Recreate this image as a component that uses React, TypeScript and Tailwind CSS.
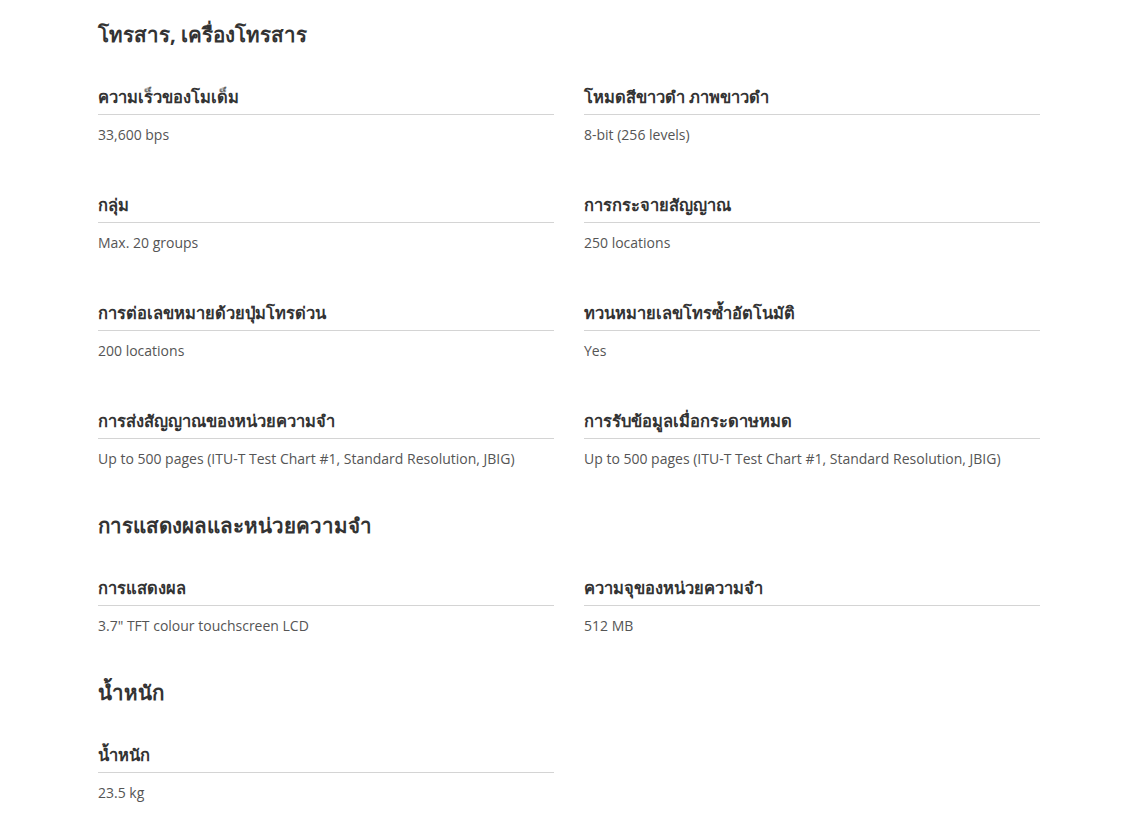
import React from "react";

type Item = { label: string; value: string };
type Section = { title: string; items: Item[] };

const sections: Section[] = [
  {
    title: "โทรสาร, เครื่องโทรสาร",
    items: [
      { label: "ความเร็วของโมเด็ม", value: "33,600 bps" },
      { label: "โหมดสีขาวดำ ภาพขาวดำ", value: "8-bit (256 levels)" },
      { label: "กลุ่ม", value: "Max. 20 groups" },
      { label: "การกระจายสัญญาณ", value: "250 locations" },
      { label: "การต่อเลขหมายด้วยปุ่มโทรด่วน", value: "200 locations" },
      { label: "ทวนหมายเลขโทรซ้ำอัตโนมัติ", value: "Yes" },
      {
        label: "การส่งสัญญาณของหน่วยความจำ",
        value: "Up to 500 pages (ITU-T Test Chart #1, Standard Resolution, JBIG)",
      },
      {
        label: "การรับข้อมูลเมื่อกระดาษหมด",
        value: "Up to 500 pages (ITU-T Test Chart #1, Standard Resolution, JBIG)",
      },
    ],
  },
  {
    title: "การแสดงผลและหน่วยความจำ",
    items: [
      { label: "การแสดงผล", value: '3.7" TFT colour touchscreen LCD' },
      { label: "ความจุของหน่วยความจำ", value: "512 MB" },
    ],
  },
  {
    title: "น้ำหนัก",
    items: [{ label: "น้ำหนัก", value: "23.5 kg" }],
  },
];

export default function App() {
  return (
    <div
      className="min-h-[820px] w-[1134px] bg-white pt-[20px] pl-[98px]"
      style={{ fontFamily: '"Open Sans", "Noto Sans", sans-serif' }}
    >
      <div className="w-[941px] flex flex-col gap-[42px]">
        {sections.map((s) => (
          <section key={s.title}>
            <h2 className="text-[20.5px] leading-[28px] font-bold text-[#333333] mb-[38px]">
              {s.title}
            </h2>
            <div className="grid grid-cols-[456px_456px] gap-x-[30px] gap-y-[49px]">
              {s.items.map((it, i) => (
                <div key={i}>
                  <div className="text-[16.5px] leading-[22px] font-bold text-[#333333] pb-[6px] border-b border-[#d4d4d4]">
                    {it.label}
                  </div>
                  <div className="mt-[10px] text-[14px] leading-[20px] text-[#555555]">
                    {it.value}
                  </div>
                </div>
              ))}
            </div>
          </section>
        ))}
      </div>
    </div>
  );
}
